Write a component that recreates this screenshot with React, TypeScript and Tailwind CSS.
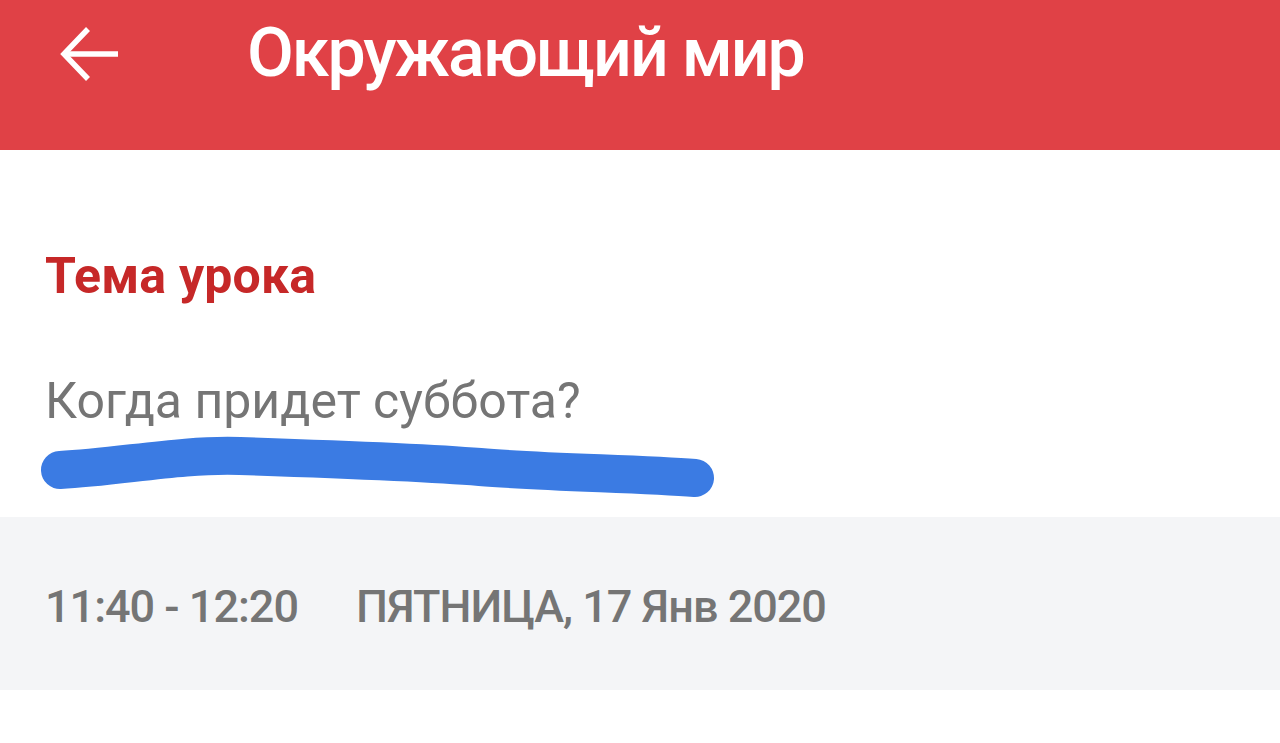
export default function App() {
  return (
    <div className="min-h-[743px] bg-white" style={{ fontFamily: 'Roboto, "Noto Sans", sans-serif' }}>
      <header className="flex h-[150px] items-start bg-[#e04146] pl-[60px] pt-[19px]">
        <svg width="60" height="56" viewBox="0 0 60 56" fill="none" stroke="white" strokeWidth="5.5" strokeLinecap="butt" className="mt-[7px]">
          <path d="M58 28H5" />
          <path d="M28 3L4 28l24 25" />
        </svg>
        <h1 className="ml-[127px] text-[68px] font-medium leading-none tracking-[-2px] text-white">Окружающий мир</h1>
      </header>

      <section>
        <h2 className="mt-[101px] pl-[45px] text-[50px] font-bold leading-none tracking-[0.2px] text-[#c62828]">Тема урока</h2>
        <p className="mt-[75px] pl-[45px] text-[50px] leading-none text-[#757575]">Когда придет суббота?</p>
        <svg width="760" height="91" viewBox="0 0 760 91" fill="none" className="block">
          <path
            d="M60 44 C 120 41, 180 28, 240 30 S 420 36, 480 41 S 640 48, 695 52"
            stroke="#3b7be3"
            strokeWidth="38"
            strokeLinecap="round"
          />
        </svg>
      </section>

      <div className="flex h-[173px] items-start gap-[58px] bg-[#f4f5f7] pl-[45px] pt-[67px] text-[45px] font-medium leading-none tracking-[-1px] text-[#757575]">
        <span>11:40 - 12:20</span>
        <span>ПЯТНИЦА, 17 Янв 2020</span>
      </div>
    </div>
  )
}
